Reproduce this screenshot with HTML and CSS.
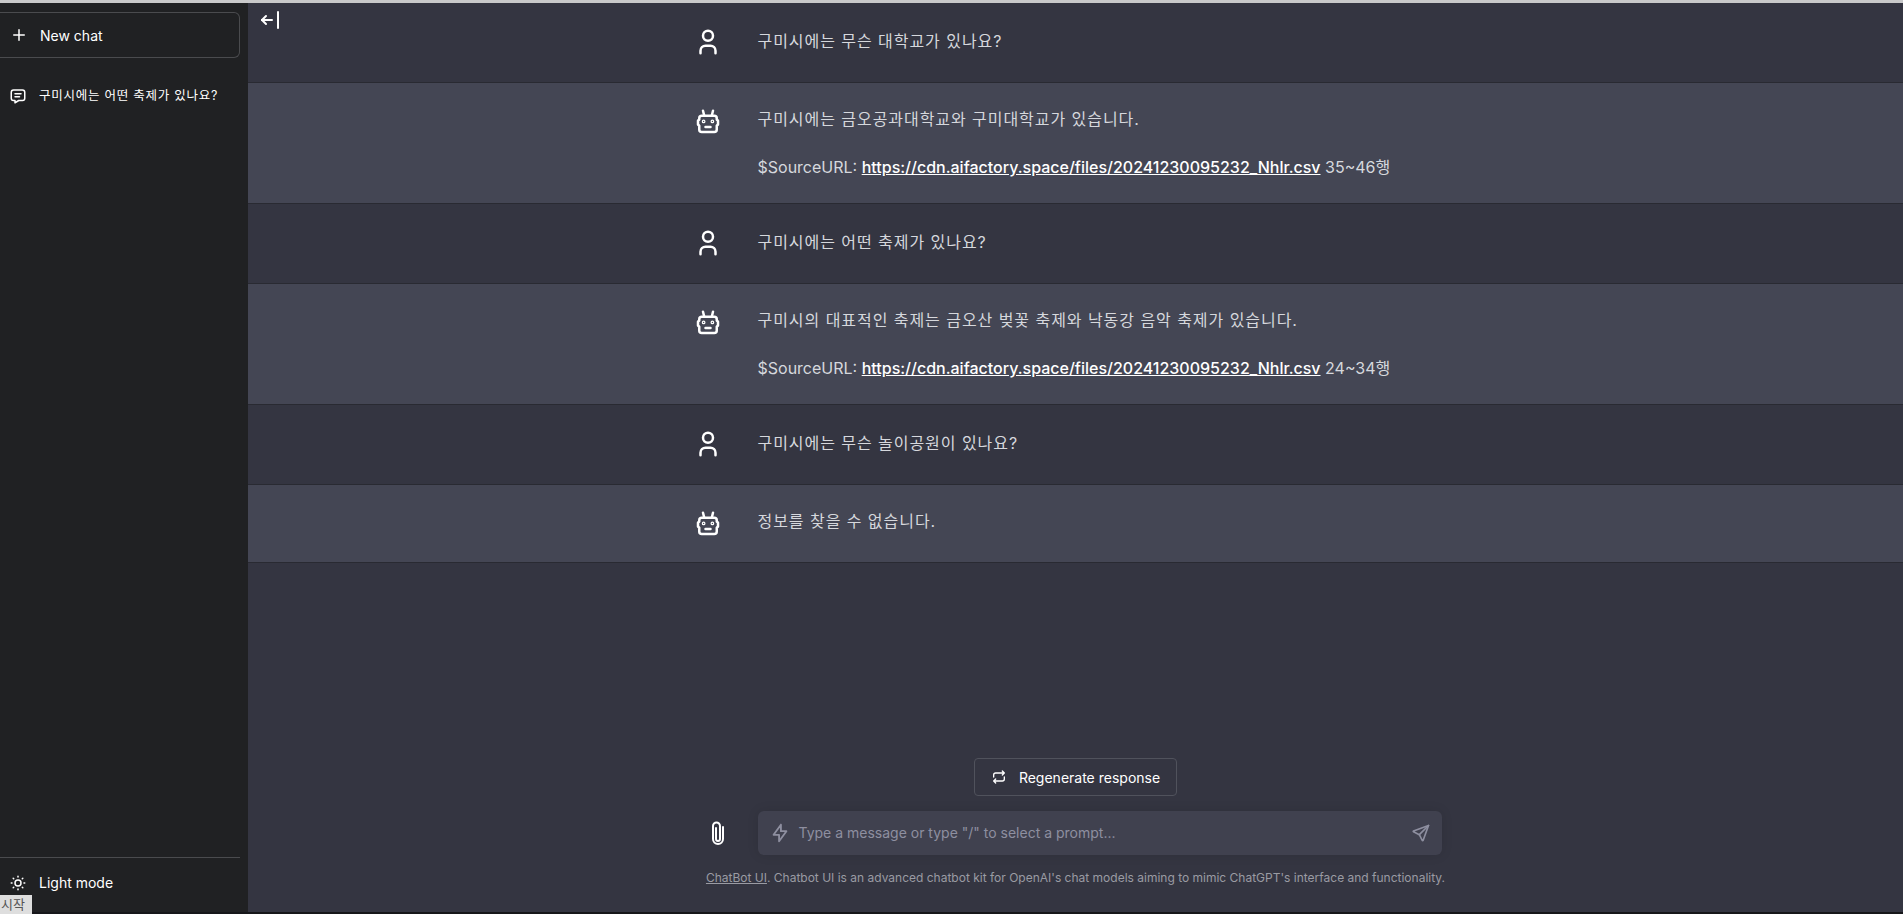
FILE: index.html
```html
<!DOCTYPE html>
<html lang="ko">
<head>
  <meta charset="UTF-8" />
  <title>Chatbot UI</title>
  <link rel="stylesheet" href="styles.css">
</head>
<body>
  <div class="topline"></div>
  <div class="app">
    <aside class="sidebar">
      <button class="new-chat">
        <svg class="icon" width="18" height="18" viewBox="0 0 24 24"><path d="M12 5v14M5 12h14"/></svg>
        New chat
      </button>
      <div class="chat-list">
        <div class="chat-item">
          <svg class="icon" width="18" height="18" viewBox="0 0 24 24"><path d="M8 9h8"/><path d="M8 13h6"/><path d="M18 4a3 3 0 0 1 3 3v8a3 3 0 0 1 -3 3h-5l-5 3v-3h-2a3 3 0 0 1 -3 -3v-8a3 3 0 0 1 3 -3h12z"/></svg>
          <span>구미시에는 어떤 축제가 있나요?</span>
        </div>
      </div>
      <div class="side-bottom">
        <div class="side-btn">
          <svg class="icon" width="18" height="18" viewBox="0 0 24 24"><path d="M8 12a4 4 0 1 0 8 0a4 4 0 1 0 -8 0"/><path d="M3 12h1m8 -9v1m8 8h1m-9 8v1m-6.4 -15.4l.7 .7m12.1 -.7l-.7 .7m0 11.4l.7 .7m-12.1 -.7l-.7 .7"/></svg>
          Light mode
        </div>
      </div>
    </aside>

    <main class="main">
      <svg class="icon toggle" width="24" height="24" viewBox="0 0 24 24"><path d="M4 12h10"/><path d="M4 12l4 4"/><path d="M4 12l4 -4"/><path d="M20 4v16"/></svg>

      <div class="messages">
        <div class="msg">
          <div class="msg-inner">
            <svg class="icon avatar" width="30" height="30" viewBox="0 0 24 24"><path d="M8 7a4 4 0 1 0 8 0a4 4 0 1 0 -8 0"/><path d="M6 21v-2a4 4 0 0 1 4 -4h4a4 4 0 0 1 4 4v2"/></svg>
            <div class="msg-text"><p class="ko">구미시에는 무슨 대학교가 있나요?</p></div>
          </div>
        </div>
        <div class="msg bot">
          <div class="msg-inner">
            <svg class="icon avatar" width="30" height="30" viewBox="0 0 24 24"><path d="M7 7h10a2 2 0 0 1 2 2v1l1 1v3l-1 1v3a2 2 0 0 1 -2 2h-10a2 2 0 0 1 -2 -2v-3l-1 -1v-3l1 -1v-1a2 2 0 0 1 2 -2z"/><path d="M10 16h4"/><circle cx="8.5" cy="11.5" r=".5"/><circle cx="15.5" cy="11.5" r=".5"/><path d="M9 7l-1 -4"/><path d="M15 7l1 -4"/></svg>
            <div class="msg-text">
              <p class="ko">구미시에는 금오공과대학교와 구미대학교가 있습니다.</p>
              <p>$SourceURL: <a href="#">https://cdn.aifactory.space/files/20241230095232_Nhlr.csv</a> 35~46행</p>
            </div>
          </div>
        </div>
        <div class="msg">
          <div class="msg-inner">
            <svg class="icon avatar" width="30" height="30" viewBox="0 0 24 24"><path d="M8 7a4 4 0 1 0 8 0a4 4 0 1 0 -8 0"/><path d="M6 21v-2a4 4 0 0 1 4 -4h4a4 4 0 0 1 4 4v2"/></svg>
            <div class="msg-text"><p class="ko">구미시에는 어떤 축제가 있나요?</p></div>
          </div>
        </div>
        <div class="msg bot">
          <div class="msg-inner">
            <svg class="icon avatar" width="30" height="30" viewBox="0 0 24 24"><path d="M7 7h10a2 2 0 0 1 2 2v1l1 1v3l-1 1v3a2 2 0 0 1 -2 2h-10a2 2 0 0 1 -2 -2v-3l-1 -1v-3l1 -1v-1a2 2 0 0 1 2 -2z"/><path d="M10 16h4"/><circle cx="8.5" cy="11.5" r=".5"/><circle cx="15.5" cy="11.5" r=".5"/><path d="M9 7l-1 -4"/><path d="M15 7l1 -4"/></svg>
            <div class="msg-text">
              <p class="ko">구미시의 대표적인 축제는 금오산 벚꽃 축제와 낙동강 음악 축제가 있습니다.</p>
              <p>$SourceURL: <a href="#">https://cdn.aifactory.space/files/20241230095232_Nhlr.csv</a> 24~34행</p>
            </div>
          </div>
        </div>
        <div class="msg">
          <div class="msg-inner">
            <svg class="icon avatar" width="30" height="30" viewBox="0 0 24 24"><path d="M8 7a4 4 0 1 0 8 0a4 4 0 1 0 -8 0"/><path d="M6 21v-2a4 4 0 0 1 4 -4h4a4 4 0 0 1 4 4v2"/></svg>
            <div class="msg-text"><p class="ko">구미시에는 무슨 놀이공원이 있나요?</p></div>
          </div>
        </div>
        <div class="msg bot">
          <div class="msg-inner">
            <svg class="icon avatar" width="30" height="30" viewBox="0 0 24 24"><path d="M7 7h10a2 2 0 0 1 2 2v1l1 1v3l-1 1v3a2 2 0 0 1 -2 2h-10a2 2 0 0 1 -2 -2v-3l-1 -1v-3l1 -1v-1a2 2 0 0 1 2 -2z"/><path d="M10 16h4"/><circle cx="8.5" cy="11.5" r=".5"/><circle cx="15.5" cy="11.5" r=".5"/><path d="M9 7l-1 -4"/><path d="M15 7l1 -4"/></svg>
            <div class="msg-text"><p class="ko">정보를 찾을 수 없습니다.</p></div>
          </div>
        </div>
      </div>

      <div class="composer">
        <button class="regen">
          <svg class="icon" width="16" height="16" viewBox="0 0 24 24"><path d="M4 12v-3a3 3 0 0 1 3 -3h13m-3 -3l3 3l-3 3"/><path d="M20 12v3a3 3 0 0 1 -3 3h-13m3 3l-3 -3l3 -3"/></svg>
          Regenerate response
        </button>
        <div class="input-row">
          <svg class="icon clip" width="20" height="24" viewBox="0 0 20 24"><path d="M8 7v11a2 2 0 0 0 4 0V5a3.500 3.500 0 0 0 -7 0v13a5 5 0 0 0 10 0V6"/></svg>
          <div class="input-box">
            <svg class="icon bolt" width="22" height="22" viewBox="0 0 24 24"><path d="M13 3v7h6l-8 11v-7h-6l8 -11"/></svg>
            <span class="placeholder">Type a message or type "/" to select a prompt...</span>
            <svg class="icon send" width="20" height="20" viewBox="0 0 24 24"><path d="M10 14l11 -11"/><path d="M21 3l-6.500 18a.55 .55 0 0 1 -1 0l-3.500 -7l-7 -3.500a.55 .55 0 0 1 0 -1l18 -6.500"/></svg>
          </div>
        </div>
        <div class="footnote"><a href="#">ChatBot UI</a>. Chatbot UI is an advanced chatbot kit for OpenAI's chat models aiming to mimic ChatGPT's interface and functionality.</div>
      </div>
    </main>
  </div>
  <div class="bottomline"></div>
  <div class="start-tag">시작</div>
</body>
</html>
```

FILE: styles.css
```css
* {
  box-sizing: border-box;
}
html, body {
  height: 100%;
}
body {
  margin: 0;
  display: flex;
  flex-direction: column;
  overflow: hidden;
  font-family: Inter, "Noto Sans CJK KR", sans-serif;
  font-size: 16px;
  background: #343541;
  color: #fff;
}
p {
  margin: 0;
}
.icon {
  fill: none;
  stroke: currentColor;
  stroke-width: 2;
  stroke-linecap: round;
  stroke-linejoin: round;
  flex: none;
}
.topline {
  height: 3px;
  background: #c9c9ca;
}
.bottomline {
  height: 2px;
  background: #16171a;
}
.app {
  flex: 1;
  min-height: 0;
  display: flex;
}

/* sidebar */
.sidebar {
  width: 248px;
  display: flex;
  flex-direction: column;
  background: #202123;
  padding: 9px 8px 0 0;
}
.new-chat {
  display: flex;
  align-items: center;
  gap: 12px;
  height: 46px;
  padding: 0 0 0 10px;
  background: none;
  border: 1px solid #4a4b4e;
  border-left: none;
  border-radius: 0 6px 6px 0;
  color: #fff;
  font: inherit;
  font-size: 14px;
}
.chat-list {
  flex: 1;
  padding: 28px 0 0 9px;
}
.chat-item {
  display: flex;
  align-items: center;
  gap: 12px;
  font-size: 12.5px;
  letter-spacing: 0.75px;
  line-height: 20px;
}
.side-bottom {
  border-top: 1px solid #4a4b4e;
  height: 55px;
}
.side-btn {
  display: flex;
  align-items: center;
  gap: 12px;
  padding: 15px 0 0 9px;
  font-size: 14px;
  line-height: 20px;
}

/* main */
.main {
  flex: 1;
  min-width: 0;
  position: relative;
  display: flex;
  flex-direction: column;
}
.toggle {
  position: absolute;
  left: 10px;
  top: 5px;
  color: #fff;
}
.messages {
  flex: 1;
  min-height: 0;
}
.msg {
  background: #343541;
  border-bottom: 1px solid #292a32;
  color: #d6d8dd;
  line-height: 24px;
}
.msg.bot {
  background: #444654;
}
.msg-inner {
  width: 768px;
  margin: 0 auto;
  display: flex;
  gap: 35px;
  padding: 24px 0 25px 1px;
}
.msg.bot .msg-inner {
  padding-bottom: 24px;
}
.avatar {
  color: #fff;
}
.msg.bot .avatar {
  margin-bottom: -1px;
}
.msg-text {
  padding-top: 2px;
}
.msg.bot .msg-text {
  padding-top: 0;
}
.msg-text .ko {
  letter-spacing: 0.95px;
}
.msg-text p + p {
  margin-top: 24px;
}
.msg-text a {
  color: #fff;
  font-weight: 500;
}

/* composer */
.composer {
  height: 154px;
  display: flex;
  flex-direction: column;
  align-items: center;
}
.regen {
  display: flex;
  align-items: center;
  gap: 12px;
  height: 38px;
  width: 203px;
  justify-content: center;
  background: #343541;
  border: 1px solid #50525c;
  border-radius: 4px;
  color: #fff;
  font: inherit;
  font-size: 14px;
}
.input-row {
  width: 768px;
  margin-top: 15px;
  display: flex;
  align-items: center;
  gap: 30px;
  padding-left: 16px;
}
.clip {
  color: #fff;
}
.input-box {
  width: 684px;
  height: 44px;
  display: flex;
  align-items: center;
  gap: 8px;
  padding: 0 11px;
  background: #40414f;
  border-radius: 6px;
  box-shadow: 0 0 12px rgba(0, 0, 0, 0.1);
  font-size: 14px;
  color: #8e8fa0;
}
.placeholder {
  flex: 1;
  margin-top: -1px;
}
.footnote {
  margin-top: 15px;
  font-size: 12px;
  line-height: 16px;
  color: #9a9ba3;
}
.footnote a {
  color: inherit;
}

/* taskbar hint over the corner */
.start-tag {
  position: absolute;
  left: 0;
  bottom: 0;
  width: 32px;
  height: 19px;
  background: #dedede;
  color: #555;
  font-size: 13px;
  line-height: 19px;
  padding-left: 1px;
}
```
